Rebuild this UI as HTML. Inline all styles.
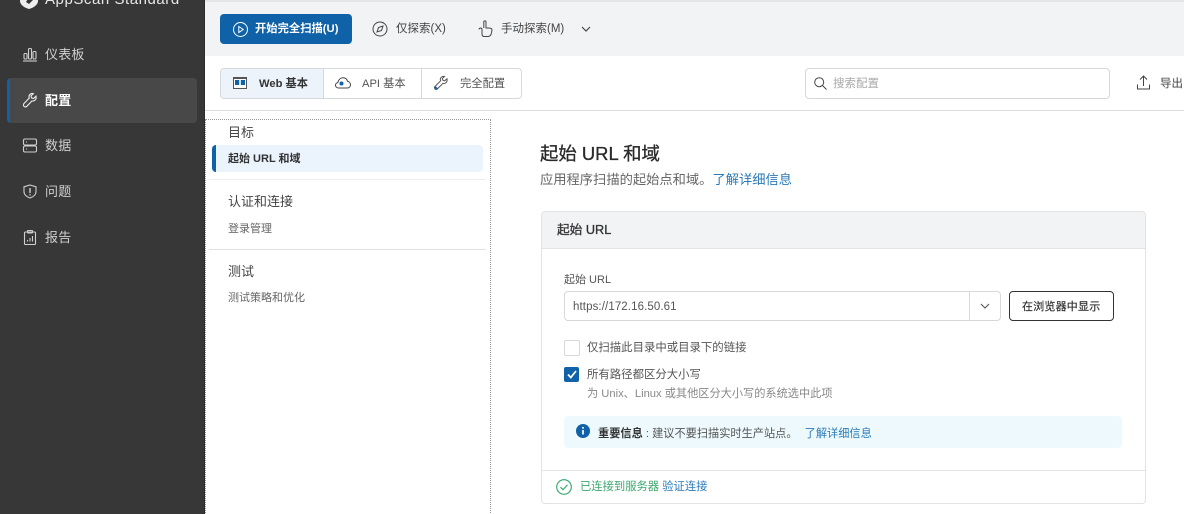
<!DOCTYPE html>
<html lang="zh">
<head>
<meta charset="utf-8">
<style>
html,body{margin:0;padding:0;background:#fff;width:1184px;height:514px;overflow:hidden}
body{position:relative;font-family:"Liberation Sans","Noto Sans CJK SC",sans-serif;color:#333}
.a{position:absolute;white-space:nowrap}
svg{position:absolute;overflow:visible}
.nav{color:#cfcfcf;font-size:13px;line-height:20px;left:45px;letter-spacing:.2px}
.si{fill:none;stroke:#cfcfcf;stroke-width:1.1}
.t{font-size:11.5px;line-height:16px}
.h{font-size:13px;line-height:18px;color:#444;left:228px}
.s{font-size:11px;line-height:16px;color:#666;left:228px}
.lnk{color:#2a7ab8}
</style>
</head>
<body>
<!-- sidebar -->
<div class="a" style="left:0;top:0;width:204px;height:514px;background:#373737"></div>
<div class="a" style="left:204px;top:0;width:1px;height:514px;background:#2c2c2c"></div>
<svg style="left:19px;top:-8px" width="22" height="18" viewBox="0 0 22 18"><path d="M1 2h18v7c0 4-5 7-9 8-4-1-9-4-9-8z" fill="#eee"/><path d="M10 5l4 3-4 4-3-2z" fill="#373737"/></svg>
<div class="a" style="left:45px;top:-10px;font-size:15px;line-height:20px;color:#e8e8e8;letter-spacing:.55px">AppScan Standard</div>

<svg class="si" style="left:23px;top:47px" width="14" height="15" viewBox="0 0 14 15"><rect x="1" y="6.5" width="3" height="5.5" rx="1"/><rect x="5.5" y="1.5" width="3" height="10.500" rx="1"/><rect x="10" y="4.500" width="3" height="7.500" rx="1"/><path d="M0 14h14"/></svg>
<div class="a nav" style="top:45px">仪表板</div>

<div class="a" style="left:7px;top:78px;width:190px;height:45px;background:#484848;border-radius:4px;overflow:hidden"><div style="width:3px;height:45px;background:#0f62a8"></div></div>
<svg class="si" style="left:23px;top:93px;stroke:#eee" width="14" height="15" viewBox="0 0 14 15"><path d="M13 3.200l-2.500 2.300-2-.6-.5-2L10.300.6C8.300 0 6 1.300 6 3.700c0 .5.100 1 .3 1.300L1 10.500c-1 1.100-.5 2.400.1 2.900.7.600 1.800.800 2.700-.1l5.200-5.400c2.300.8 4.800-1.500 4-4.700z"/></svg>
<div class="a nav" style="top:91px;color:#fff;font-weight:700">配置</div>

<svg class="si" style="left:23px;top:138px" width="14" height="15" viewBox="0 0 14 15"><rect x=".5" y="1" width="13" height="6" rx="1.500"/><rect x=".5" y="8" width="13" height="6" rx="1.500"/><path d="M3 4h1M3 11h1"/></svg>
<div class="a nav" style="top:136px">数据</div>

<svg class="si" style="left:23px;top:184px" width="14" height="15" viewBox="0 0 14 15"><path d="M7 1l6 1.800v5c0 3-3 5.200-6 6.200-3-1-6-3.200-6-6.200v-5z"/><path d="M7 4v5M7 10.300v1.200" stroke-width="1.400"/></svg>
<div class="a nav" style="top:182px">问题</div>

<svg class="si" style="left:24px;top:230px" width="13" height="15" viewBox="0 0 13 15"><rect x=".5" y="2" width="11" height="12.500" rx="1"/><rect x="3.500" y=".5" width="5" height="2.500" rx=".5"/><path d="M3.500 11.500v-1.500M6 11.500V8M8.500 11.500V6"/></svg>
<div class="a nav" style="top:228px">报告</div>

<!-- toolbar -->
<div class="a" style="left:205px;top:0;width:979px;height:2px;background:#e4e5e7"></div>
<div class="a" style="left:205px;top:2px;width:979px;height:54px;background:#f2f3f5"></div>
<div class="a" style="left:220px;top:14px;width:132px;height:30px;background:#0f62a8;border-radius:4px"></div>
<svg style="left:233px;top:22px" width="15" height="15" viewBox="0 0 15 15" fill="none" stroke="#fff"><circle cx="7.500" cy="7.500" r="7"/><path d="M5.800 4.500l4.400 3-4.400 3z"/></svg>
<div class="a t" style="left:255px;top:21px;color:#fff;font-weight:700;font-size:11.3px">开始完全扫描(U)</div>
<svg style="left:372px;top:21px" width="16" height="16" viewBox="0 0 16 16" fill="none" stroke="#444"><circle cx="8" cy="8" r="7"/><path d="M11 5L9.500 9.500 5 11l1.500-4.500z"/></svg>
<div class="a t" style="left:396px;top:21px;color:#444">仅探索(X)</div>
<svg style="left:478px;top:20px" width="15" height="17" viewBox="0 0 15 17" fill="none" stroke="#444"><path d="M1 9.500c0-1 .5-1.500 2-1.500l1 1V14c0 1.500 1 2.500 2.500 2.500H10c2 0 3-1.500 3.500-3.500l.5-3c0-1.500-2-2-3.500-2H8V2C8 .5 5.800.5 5.800 2v6"/></svg>
<div class="a t" style="left:501px;top:21px;color:#444">手动探索(M)</div>
<svg style="left:581px;top:26px" width="10" height="7" viewBox="0 0 10 7" fill="none" stroke="#444" stroke-width="1.200"><path d="M1 1l4 4 4-4"/></svg>

<!-- second row -->
<div class="a" style="left:220px;top:68px;width:300px;height:29px;border:1px solid #d6d8db;border-radius:4px;background:#fff"></div>
<div class="a" style="left:221px;top:69px;width:102px;height:29px;background:#edf3fb;border-right:1px solid #d6d8db;border-radius:3px 0 0 3px"></div>
<div class="a" style="left:421px;top:69px;width:1px;height:29px;background:#d6d8db"></div>
<svg style="left:233px;top:77px" width="14" height="12" viewBox="0 0 14 12"><rect x=".5" y=".5" width="13" height="11" fill="#fff" stroke="#555"/><rect y="0" width="14" height="2" fill="#555"/><rect x="2" y="3" width="4.200" height="5" fill="#0f62a8"/><rect x="7.800" y="3" width="4.200" height="5" fill="#0f62a8"/></svg>
<div class="a t" style="left:259px;top:76px;font-weight:700;color:#333;font-size:11.2px">Web 基本</div>
<svg style="left:335px;top:77px" width="16" height="12" viewBox="0 0 16 12" fill="none" stroke="#444"><path d="M3.500 11C1.500 11 .5 9.500.5 8.200c0-1.300 1-2.400 2.300-2.600C3.500 2.800 5.500.8 8 .8c2.300 0 4 1.500 4.500 3.500 1.800.3 3 1.800 3 3.500 0 1.700-1.300 3.200-3.200 3.200z"/><circle cx="6.500" cy="6.500" r="2" fill="#0f62a8" stroke="none"/></svg>
<div class="a t" style="left:362px;top:76px;color:#555;font-size:11.2px">API 基本</div>
<svg style="left:434px;top:76px" width="14" height="14" viewBox="0 0 14 14" fill="none" stroke="#555"><path d="M13 2.800l-2.300 2-1.800-.5-.5-1.900L10.500.5C8.500 0 6.300 1.300 6.300 3.500c0 .5.100.9.300 1.300L1 10.500c-.9 1-.4 2 .1 2.500.7.600 1.600.600 2.300-.1L9 7.300c2.200.8 4.700-1.300 4-4.500z"/><path d="M1 11l2 2" stroke="#0f62a8" stroke-width="2"/></svg>
<div class="a t" style="left:460px;top:76px;color:#555;font-size:11.3px">完全配置</div>

<div class="a" style="left:805px;top:68px;width:303px;height:29px;border:1px solid #d6d8db;border-radius:4px;background:#fff"></div>
<svg style="left:814px;top:77px" width="13" height="13" viewBox="0 0 13 13" fill="none" stroke="#444"><circle cx="5.200" cy="5.200" r="4.500"/><path d="M8.500 8.500l4 4"/></svg>
<div class="a t" style="left:833px;top:76px;color:#a8a8a8">搜索配置</div>
<svg style="left:1137px;top:75px" width="13" height="15" viewBox="0 0 13 15" fill="none" stroke="#444"><path d="M6.500 11V1M3 4.500L6.500 1 10 4.500M.5 9.500v4.500h12V9.500"/></svg>
<div class="a t" style="left:1160px;top:76px;color:#444">导出</div>
<div class="a" style="left:205px;top:110px;width:979px;height:1px;background:#dcdde0"></div>

<!-- left panel -->
<div class="a" style="left:205px;top:119px;width:284px;height:395px;border:1px dotted #999;border-bottom:0"></div>
<div class="a h" style="top:124px">目标</div>
<div class="a" style="left:212px;top:145px;width:271px;height:27px;background:#ebf3fc;border-radius:4px;overflow:hidden"><div style="width:4px;height:27px;background:#0f62a8"></div></div>
<div class="a s" style="top:151px;color:#333;font-weight:700">起始 URL 和域</div>
<div class="a" style="left:209px;top:179px;width:277px;height:1px;background:#efefef"></div>
<div class="a h" style="top:193px">认证和连接</div>
<div class="a s" style="top:221px">登录管理</div>
<div class="a" style="left:209px;top:249px;width:277px;height:1px;background:#e2e2e2"></div>
<div class="a h" style="top:263px">测试</div>
<div class="a s" style="top:290px">测试策略和优化</div>

<!-- main -->
<div class="a" style="left:540px;top:141px;font-size:18.4px;line-height:26px;color:#2a2a2a;-webkit-text-stroke:.3px #2a2a2a">起始 URL 和域</div>
<div class="a" style="left:540px;top:171px;font-size:13.27px;line-height:18px;color:#666">应用程序扫描的起始点和域。<span class="lnk">了解详细信息</span></div>

<div class="a" style="left:541px;top:211px;width:603px;height:291px;border:1px solid #e2e3e5;border-radius:4px;background:#fff"></div>
<div class="a" style="left:542px;top:212px;width:603px;height:36px;background:#f2f3f5;border-bottom:1px solid #e2e3e5;border-radius:3px 3px 0 0"></div>
<div class="a" style="left:557px;top:221px;font-size:12.7px;line-height:18px;color:#333;-webkit-text-stroke:.3px #333">起始 URL</div>
<div class="a t" style="left:564px;top:272px;color:#555;font-size:11px">起始 URL</div>

<div class="a" style="left:564px;top:291px;width:435px;height:28px;border:1px solid #d6d8db;border-radius:4px"></div>
<div class="a" style="left:969px;top:292px;width:1px;height:28px;background:#d6d8db"></div>
<div class="a t" style="left:573px;top:299px;color:#555;font-size:11.5px;letter-spacing:.1px">https://172.16.50.61</div>
<svg style="left:980px;top:303px" width="10" height="6" viewBox="0 0 10 6" fill="none" stroke="#555" stroke-width="1.100"><path d="M1 1l4 4 4-4"/></svg>
<div class="a" style="left:1009px;top:291px;width:103px;height:28px;border:1px solid #333;border-radius:4px"></div>
<div class="a t" style="left:1022px;top:299px;font-size:11px;color:#333;-webkit-text-stroke:.2px #333;letter-spacing:.2px">在浏览器中显示</div>

<div class="a" style="left:564px;top:340px;width:14px;height:14px;border:1px solid #d6d8db;border-radius:2px"></div>
<div class="a t" style="left:587px;top:340px;font-size:11.4px;color:#555">仅扫描此目录中或目录下的链接</div>
<div class="a" style="left:564px;top:367px;width:15px;height:15px;background:#0f62a8;border-radius:2px"></div>
<svg style="left:567px;top:370px" width="10" height="9" viewBox="0 0 10 9" fill="none" stroke="#fff" stroke-width="1.800"><path d="M1 4.500l2.800 3L9 1"/></svg>
<div class="a t" style="left:587px;top:367px;font-size:11.4px;color:#555">所有路径都区分大小写</div>
<div class="a t" style="left:587px;top:386px;font-size:11.2px;color:#888">为 Unix、Linux 或其他区分大小写的系统选中此项</div>

<div class="a" style="left:564px;top:416px;width:558px;height:32px;background:#edf9fc;border-radius:4px"></div>
<svg style="left:576px;top:424px" width="14" height="14" viewBox="0 0 14 14"><circle cx="7" cy="7" r="7" fill="#0f62a8"/><path d="M7 6v4.500M7 3v1.600" stroke="#fff" stroke-width="1.700"/></svg>
<div class="a t" style="left:598px;top:426px;font-size:11.2px;color:#555"><b style="color:#333">重要信息</b> : 建议不要扫描实时生产站点。 <span class="lnk" style="margin-left:4px">了解详细信息</span></div>

<div class="a" style="left:542px;top:470px;width:603px;height:1px;background:#e4e5e7"></div>
<svg style="left:556px;top:479px" width="16" height="16" viewBox="0 0 16 16" fill="none" stroke="#2aa866" stroke-width="1.100"><circle cx="8" cy="8" r="7.300"/><path d="M4.500 8.200l2.500 2.500 4.500-5"/></svg>
<div class="a t" style="left:580px;top:479px;font-size:11.3px;color:#3aa76d">已连接到服务器 <span class="lnk">验证连接</span></div>
</body>
</html>
